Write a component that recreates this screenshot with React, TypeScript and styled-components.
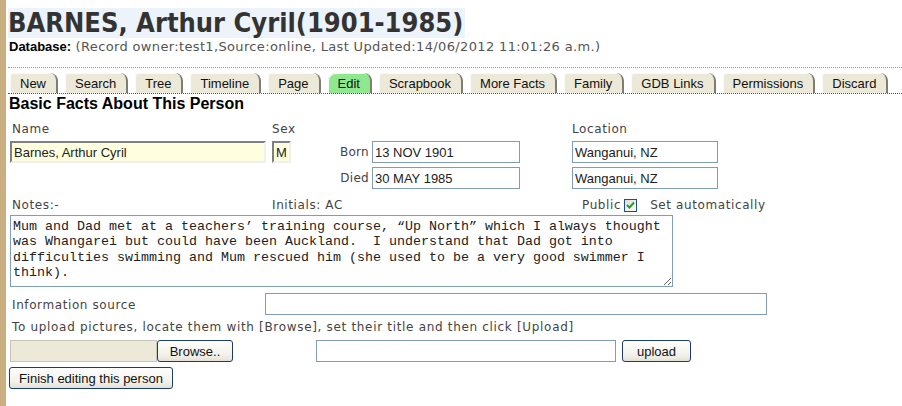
import React from 'react';
import styled, { createGlobalStyle } from 'styled-components';

const GlobalStyle = createGlobalStyle`
  html, body {
    margin: 0;
    padding: 0;
    background: #ffffff;
  }
  body {
    font-family: "DejaVu Sans", Verdana, sans-serif;
    font-size: 12px;
    letter-spacing: 0.6px;
    color: #444;
  }
`;

const Page = styled.div`
  min-height: 406px;
  box-sizing: border-box;
  border-left: 6px solid #c9ae7f;
  padding: 8px 0 0 2px;
`;

const Title = styled.h1`
  display: inline-block;
  margin: 0;
  height: 30px;
  line-height: 30px;
  padding-right: 2px;
  background: #edf3fa;
  color: #333;
  font-family: "DejaVu Sans Condensed", "DejaVu Sans", sans-serif;
  font-stretch: condensed;
  font-weight: bold;
  font-size: 27px;
  letter-spacing: 0;
`;

const Meta = styled.div`
  line-height: 17px;
  padding-left: 1px;
  color: #555;
  font-size: 13px;
  letter-spacing: 0.35px;

  b {
    font-family: "Liberation Sans", Arial, sans-serif;
    font-size: 13px;
    letter-spacing: 0;
    color: #000;
  }
`;

const TabBar = styled.nav`
  display: flex;
  gap: 7px;
  margin-top: 12px;
  padding: 5px 0 0 2px;
  border-top: 1px dotted #999;
  border-bottom: 1px dotted #555;
`;

interface TabProps {
  $active?: boolean;
}
const Tab = styled.span<TabProps>`
  height: 20px;
  line-height: 21px;
  padding: 0 10px;
  box-sizing: content-box;
  background: ${(p: TabProps) => (p.$active ? '#8ee88e' : '#ece9d8')};
  border-right: 2px solid #807c70;
  border-top-left-radius: ${(p: TabProps) => (p.$active ? '7px' : '3px')};
  border-top-right-radius: 8px;
  box-shadow: inset 1px 1px 0 #fbfaf5;
  font-family: "Liberation Sans", Arial, sans-serif;
  font-size: 13px;
  letter-spacing: 0;
  color: #111;
  white-space: nowrap;
`;

const Heading = styled.h2`
  margin: 0 0 0 1px;
  line-height: 19px;
  font-family: "Liberation Sans", Arial, sans-serif;
  font-size: 16px;
  font-weight: bold;
  letter-spacing: 0;
  color: #000;
`;

const Form = styled.div`
  padding-left: 2px;
`;

const FactsGrid = styled.div`
  display: grid;
  grid-template-columns: 262px 100px 200px 1fr;
  grid-template-rows: 20px 22px 22px 20px;
  row-gap: 4px;
  margin-top: 4px;
  align-items: center;
`;

interface LabelProps {
  $indent?: boolean;
}
const Label = styled.span<LabelProps>`
  padding: 4px 0 0 ${(p: LabelProps) => (p.$indent ? '2px' : '0')};
  line-height: 16px;
  color: #444;
  white-space: nowrap;
`;

interface FieldProps {
  $width: number;
  $yellow?: boolean;
}
const Field = styled.input<FieldProps>`
  box-sizing: border-box;
  width: ${(p: FieldProps) => p.$width}px;
  height: 22px;
  margin: 0;
  padding: 1px 2px 0;
  font-family: "Liberation Sans", Arial, sans-serif;
  font-size: 13px;
  letter-spacing: 0;
  color: #222;
  outline: 0;
  ${(p: FieldProps) =>
    p.$yellow
      ? `background: #ffffe0;
         border: 2px solid #808080;
         border-right-color: #f0f0f0;
         border-bottom-color: #f0f0f0;`
      : `background: #fff;
         border: 1px solid #7f9db9;`}
`;

const SplitCell = styled.div`
  display: flex;
  justify-content: space-between;
  align-items: center;
  padding-right: 3px;
`;

const DateLabel = styled.span`
  color: #444;
  letter-spacing: 0.3px;
`;

const PublicCell = styled.div`
  display: flex;
  align-items: center;
  padding: 4px 0 0 10px;
  color: #444;
`;

const Check = styled.span`
  display: inline-flex;
  box-sizing: border-box;
  width: 13px;
  height: 13px;
  margin: 0 13px 0 3px;
  border: 1px solid #1c5180;
  background: linear-gradient(135deg, #dcdcd7, #fff);
  align-items: center;
  justify-content: center;
`;

const NotesArea = styled.textarea`
  box-sizing: border-box;
  display: block;
  width: 663px;
  height: 72px;
  margin: 2px 0 0;
  padding: 3px 2px 1px;
  border: 1px solid #7f9db9;
  font-family: "Liberation Mono", "Courier New", monospace;
  font-size: 13.33px;
  line-height: 15.3px;
  letter-spacing: 0;
  color: #222;
  resize: both;
  outline: 0;
`;

const SourceRow = styled.div`
  display: flex;
  align-items: center;
  margin-top: 6px;

  ${Label} {
    width: 253px;
    padding-top: 2px;
  }
`;

const Hint = styled.div`
  line-height: 20px;
  margin-top: 2px;
  padding-left: 2px;
  letter-spacing: 0.68px;
  color: #444;
`;

const UploadRow = styled.div`
  display: flex;
  align-items: center;
  margin-top: 3px;
`;

const FileBox = styled.span`
  box-sizing: border-box;
  width: 147px;
  height: 22px;
  background: #ece9d8;
  border: 1px solid #c8c5b8;
`;

interface ButtonProps {
  $width: number;
}
const Button = styled.button<ButtonProps>`
  box-sizing: border-box;
  width: ${(p: ButtonProps) => p.$width}px;
  height: 22px;
  margin: 0;
  padding: 0 4px;
  border: 1px solid #1c3c6c;
  border-radius: 3px;
  background: linear-gradient(#fefefd, #f2f1ea 70%, #e3e1d6);
  font-family: "Liberation Sans", Arial, sans-serif;
  font-size: 13px;
  letter-spacing: 0;
  color: #111;
  white-space: nowrap;
`;

const Spacer = styled.span<{ $width: number }>`
  width: ${p => p.$width}px;
  flex: none;
`;

const FinishRow = styled.div`
  margin-top: 5px;
  margin-left: -1px;
`;

const tabs = [
  'New',
  'Search',
  'Tree',
  'Timeline',
  'Page',
  'Edit',
  'Scrapbook',
  'More Facts',
  'Family',
  'GDB Links',
  'Permissions',
  'Discard',
];

const notes =
  'Mum and Dad met at a teachers\u2019 training course, \u201cUp North\u201d which I always thought was Whangarei but could have been Auckland.  I understand that Dad got into difficulties swimming and Mum rescued him (she used to be a very good swimmer I think).';

const App = () => {
  return (
    <>
      <GlobalStyle />
      <Page>
        <Title>BARNES, Arthur Cyril(1901-1985)</Title>
        <Meta>
          <b>Database:</b> (Record owner:test1,Source:online, Last Updated:14/06/2012 11:01:26 a.m.)
        </Meta>
        <TabBar>
          {tabs.map(t => (
            <Tab key={t} $active={t === 'Edit'}>
              {t}
            </Tab>
          ))}
        </TabBar>
        <Heading>Basic Facts About This Person</Heading>
        <Form>
          <FactsGrid>
            <Label $indent>Name</Label>
            <Label>Sex</Label>
            <span />
            <Label>Location</Label>

            <Field $width={256} $yellow defaultValue="Barnes, Arthur Cyril" />
            <SplitCell>
              <Field $width={19} $yellow defaultValue="M" />
              <DateLabel>Born</DateLabel>
            </SplitCell>
            <Field $width={148} defaultValue="13 NOV 1901" />
            <Field $width={146} defaultValue="Wanganui, NZ" />

            <span />
            <SplitCell>
              <span />
              <DateLabel>Died</DateLabel>
            </SplitCell>
            <Field $width={148} defaultValue="30 MAY 1985" />
            <Field $width={146} defaultValue="Wanganui, NZ" />

            <Label $indent>Notes:-</Label>
            <Label>Initials: AC</Label>
            <span />
            <PublicCell>
              Public
              <Check>
                <svg width="9" height="8" viewBox="0 0 9 8">
                  <path d="M1 4 L3.5 6.5 L8 1.5" fill="none" stroke="#21a121" strokeWidth="2" />
                </svg>
              </Check>
              Set automatically
            </PublicCell>
          </FactsGrid>
          <NotesArea defaultValue={notes} spellCheck={false} />
          <SourceRow>
            <Label $indent>Information source</Label>
            <Field $width={502} />
          </SourceRow>
          <Hint>To upload pictures, locate them with [Browse], set their title and then click [Upload]</Hint>
          <UploadRow>
            <FileBox />
            <Button $width={76}>Browse..</Button>
            <Spacer $width={83} />
            <Field $width={300} />
            <Spacer $width={6} />
            <Button $width={69}>upload</Button>
          </UploadRow>
          <FinishRow>
            <Button $width={164}>Finish editing this person</Button>
          </FinishRow>
        </Form>
      </Page>
    </>
  );
};

export default App;
